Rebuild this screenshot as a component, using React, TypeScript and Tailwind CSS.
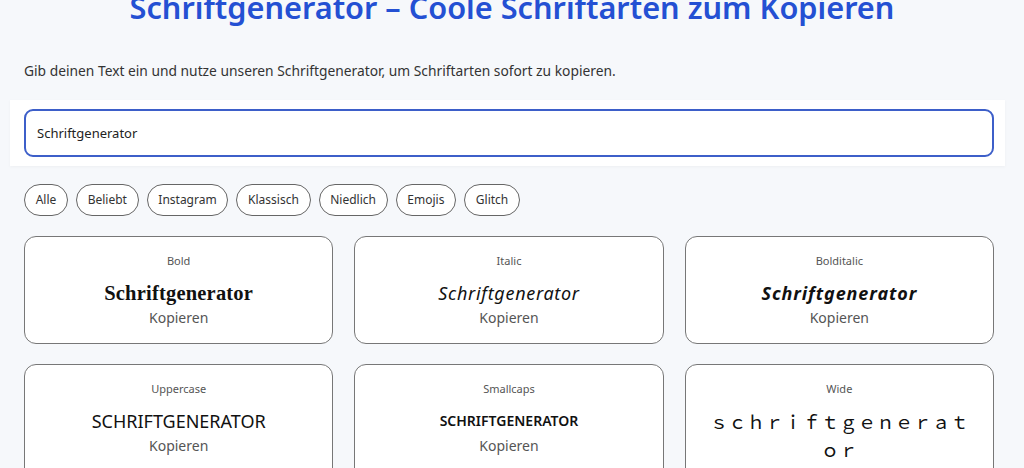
import { useState } from 'react'

const FILTERS = ['Alle', 'Beliebt', 'Instagram', 'Klassisch', 'Niedlich', 'Emojis', 'Glitch']

const toWide = (s: string) =>
  Array.from(s.toLowerCase())
    .map(ch => {
      const c = ch.charCodeAt(0)
      return c >= 33 && c <= 126 ? String.fromCharCode(c + 0xfee0) : ch
    })
    .join('')

type Style = { name: string; render: (t: string) => string; cls: string }

const STYLES: Style[] = [
  { name: 'Bold', render: t => t, cls: "font-['Liberation_Serif',serif] font-bold text-[20.5px] tracking-[0.2px]" },
  { name: 'Italic', render: t => t, cls: 'italic text-[18px] tracking-[0.7px]' },
  { name: 'Bolditalic', render: t => t, cls: 'italic font-bold text-[18px] tracking-[0.9px]' },
  { name: 'Uppercase', render: t => t.toUpperCase(), cls: 'text-[18px]' },
  { name: 'Smallcaps', render: t => t.toUpperCase(), cls: 'text-[14px] font-semibold' },
  { name: 'Wide', render: toWide, cls: "font-['Noto_Sans_CJK_SC','Noto_Sans',sans-serif] text-[18.5px]" },
]

export default function App() {
  const [text, setText] = useState('Schriftgenerator')
  const [filter, setFilter] = useState('Alle')

  return (
    <div className="min-h-screen bg-[#f6f8fb] font-['Noto_Sans',sans-serif] text-[#222] overflow-hidden">
      <h1 className="text-center text-[30.7px] leading-[40px] font-semibold text-[#2450d3] -mt-[13px]">
        Schriftgenerator – Coole Schriftarten zum Kopieren
      </h1>
      <p className="pl-6 mt-[34px] text-[13.8px] text-[#333]">
        Gib deinen Text ein und nutze unseren Schriftgenerator, um Schriftarten sofort zu kopieren.
      </p>

      <div className="ml-[10px] mr-[19px] mt-[18px] bg-white pl-[14px] pr-[11px] py-[9px] shadow-[0_1px_3px_rgba(0,0,0,0.04)]">
        <input
          value={text}
          onChange={e => setText(e.target.value)}
          className="w-full h-[48px] rounded-[9px] border-2 border-[#3d5fc9] px-[11px] text-[13px] text-[#222] outline-none bg-white"
        />
      </div>

      <div className="pl-6 pr-[30px] mt-[18px] flex gap-2">
        {FILTERS.map(f => (
          <button
            key={f}
            onClick={() => setFilter(f)}
            className={`h-[32px] px-[10.7px] rounded-full border border-[#666] text-[12px] text-[#333] ${filter === f ? 'bg-white' : 'bg-white'}`}
          >
            {f}
          </button>
        ))}
      </div>

      <div className="pl-6 pr-[30px] mt-[20px] grid grid-cols-3 gap-x-[21px] gap-y-[20px]">
        {STYLES.map(s => (
          <div key={s.name} className="min-h-[108px] bg-white border border-[#777] rounded-[12px] px-4 pt-[16px] pb-[10px] text-center">
            <div className="text-[11px] text-[#555] leading-[16px]">{s.name}</div>
            <div className={`mt-[10px] leading-[28px] text-[#111] ${s.cls}`}>{s.render(text)}</div>
            <div className="text-[14px] text-[#555] leading-[22px]">Kopieren</div>
          </div>
        ))}
      </div>
    </div>
  )
}
